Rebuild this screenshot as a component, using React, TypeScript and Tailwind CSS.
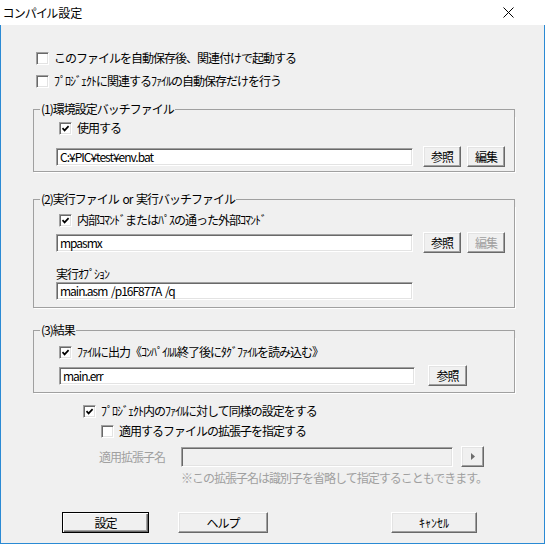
import React from "react";

const sunken =
  "border-t border-l border-t-[#a0a0a0] border-l-[#a0a0a0] border-b border-r border-b-white border-r-white shadow-[inset_1px_1px_0_#696969,inset_-1px_-1px_0_#e3e3e3]";
const raised =
  "border-t border-l border-t-white border-l-white border-b border-r border-b-[#696969] border-r-[#696969] shadow-[inset_-1px_-1px_0_#a0a0a0,inset_1px_1px_0_#e3e3e3]";

function Box({ checked }: { checked?: boolean }) {
  return (
    <span className={`flex h-[13px] w-[13px] shrink-0 items-center justify-center bg-white ${sunken}`}>
      {checked && (
        <svg width="9" height="9" viewBox="0 0 9 9">
          <path d="M1.5 4.2 L3.6 6.4 L7.6 2.2" fill="none" stroke="#000" strokeWidth="1.7" />
        </svg>
      )}
    </span>
  );
}

function CheckRow({ checked, label, className = "" }: { checked?: boolean; label: string; className?: string }) {
  return (
    <div className={`flex h-[14px] items-center gap-[5px] ${className}`}>
      <Box checked={checked} />
      <span className="whitespace-nowrap">{label}</span>
    </div>
  );
}

function Field({ value, className = "", disabled }: { value?: string; className?: string; disabled?: boolean }) {
  return (
    <div
      className={`flex h-[18px] shrink-0 items-center pl-[3px] whitespace-nowrap ${
        disabled ? "bg-[#f0f0f0]" : "bg-white"
      } ${sunken} ${className}`}
    >
      {value}
    </div>
  );
}

function Btn({ label, className = "", disabled }: { label: React.ReactNode; className?: string; disabled?: boolean }) {
  return (
    <button
      className={`flex h-[21px] shrink-0 items-center justify-center bg-[#f0f0f0] ${raised} ${
        disabled ? "text-[#a0a0a0]" : "text-black"
      } ${className}`}
    >
      {label}
    </button>
  );
}

// etched group box: header row carries the top line on both sides of the caption
function Group({ title, className = "", children }: { title: string; className?: string; children: React.ReactNode }) {
  return (
    <div className={`flex flex-col ${className}`}>
      <div className="flex h-[14px]">
        <div className="mt-[7px] h-[7px] w-[7px] shrink-0 border-t border-l border-[#a0a0a0]" />
        <span className="px-[1px] whitespace-nowrap">{title}</span>
        <div className="mt-[7px] h-[7px] flex-1 border-t border-r border-[#a0a0a0]" />
      </div>
      <div className="flex flex-col border-x border-b border-[#a0a0a0] shadow-[1px_1px_0_#fff]">{children}</div>
    </div>
  );
}

export default function App() {
  return (
    <div className="flex h-[544px] w-[545px] flex-col font-['Noto_Sans_CJK_JP',sans-serif] text-[12px] leading-[14px] tracking-[-1px] text-black">
      <div className="flex h-[25px] shrink-0 items-center justify-between bg-white pl-[3px] pr-[31px]">
        <span className="tracking-normal [font-feature-settings:'palt']">コンパイル設定</span>
        <svg width="11" height="11" viewBox="0 0 11 11">
          <path d="M0.5 0.5 L10.5 10.5 M10.5 0.5 L0.5 10.5" stroke="#000" strokeWidth="1" />
        </svg>
      </div>

      <div className="flex flex-1 flex-col border-x border-b border-[#2a8ad4] bg-[#f0f0f0] pl-[32px] pr-[29px]">
        <CheckRow className="mt-[26px] ml-[3px]" label="このファイルを自動保存後、関連付けで起動する" />
        <CheckRow className="mt-[9px] ml-[3px]" label="ﾌﾟﾛｼﾞｪｸﾄに関連するﾌｧｲﾙの自動保存だけを行う" />

        <Group title="(1)環境設定バッチファイル" className="mt-[14px]">
          <CheckRow checked className="mt-[5px] ml-[25px]" label="使用する" />
          <div className="mt-[11px] mb-[4px] flex items-center">
            <Field value="C:¥PIC¥test¥env.bat" className="ml-[22px] w-[357px]" />
            <Btn label="参照" className="ml-[10px] w-[38px]" />
            <Btn label="編集" className="ml-[6px] w-[38px]" />
          </div>
        </Group>

        <Group title="(2)実行ファイル or 実行バッチファイル" className="mt-[20px] [word-spacing:2px]">
          <CheckRow checked className="mt-[7px] ml-[25px]" label="内部ｺﾏﾝﾄﾞまたはﾊﾟｽの通った外部ｺﾏﾝﾄﾞ" />
          <div className="mt-[5px] flex items-center">
            <Field value="mpasmx" className="ml-[22px] w-[357px]" />
            <Btn label="参照" className="ml-[10px] w-[38px]" />
            <Btn label="編集" disabled className="ml-[6px] w-[38px]" />
          </div>
          <div className="mt-[14px] ml-[22px] whitespace-nowrap">実行ｵﾌﾟｼｮﾝ</div>
          <Field value="main.asm /p16F877A /q" className="mt-[1px] mb-[7px] ml-[22px] w-[357px]" />
        </Group>

        <Group title="(3)結果" className="mt-[15px]">
          <CheckRow checked className="mt-[8px] ml-[25px]" label="ﾌｧｲﾙに出力《ｺﾝﾊﾟｲﾙﾙ終了後にﾀｸﾞﾌｧｲﾙを読み込む》" />
          <div className="mt-[6px] mb-[6px] flex items-center">
            <Field value="main.err" className="ml-[25px] w-[356px]" />
            <Btn label="参照" className="ml-[13px] w-[39px]" />
          </div>
        </Group>

        <CheckRow checked className="mt-[11px] ml-[50px]" label="ﾌﾟﾛｼﾞｪｸﾄ内のﾌｧｲﾙに対して同様の設定をする" />
        <CheckRow className="mt-[6px] ml-[68px]" label="適用するファイルの拡張子を指定する" />

        <div className="mt-[8px] flex items-center">
          <span className="ml-[66px] w-[82px] text-[#a0a0a0]">適用拡張子名</span>
          <Field disabled className="h-[20px] w-[272px]" />
          <Btn
            label={
              <svg width="4" height="7" viewBox="0 0 4 7">
                <path d="M0 0 L4 3.5 L0 7 Z" fill="#6d6d6d" />
              </svg>
            }
            className="ml-[8px] h-[20px] w-[23px]"
          />
        </div>
        <div className="mt-[4px] ml-[148px] whitespace-nowrap text-[#a0a0a0]">
          ※この拡張子名は識別子を省略して指定することもできます。
        </div>

        <div className="mt-[27px] flex items-center">
          <button className="ml-[29px] flex h-[21px] w-[87px] items-center justify-center border border-black bg-[#f0f0f0] shadow-[inset_1px_1px_0_#fff,inset_-1px_-1px_0_#696969,inset_-2px_-2px_0_#a0a0a0]">
            設定
          </button>
          <Btn label="ヘルプ" className="ml-[29px] w-[90px]" />
          <Btn label="ｷｬﾝｾﾙ" className="ml-[123px] w-[86px] tracking-normal" />
        </div>
      </div>
    </div>
  );
}
